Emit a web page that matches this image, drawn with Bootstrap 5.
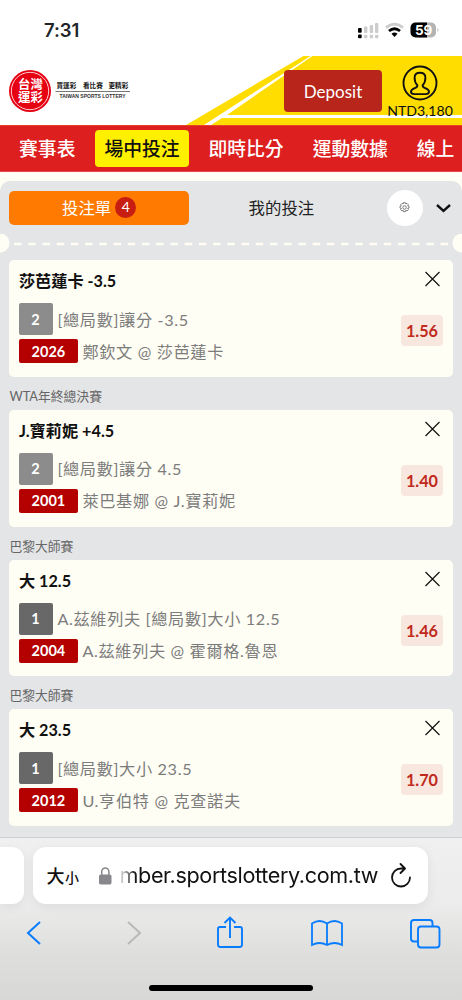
<!DOCTYPE html>
<html lang="zh-Hant">
<head>
<meta charset="utf-8">
<meta name="viewport" content="width=device-width, initial-scale=1">
<title>台灣運彩</title>
<link href="https://cdn.jsdelivr.net/npm/bootstrap@5.3.0/dist/css/bootstrap.min.css" rel="stylesheet">
<style>
body{font-family:Lato,"Noto Sans CJK TC",sans-serif;background:#fff;height:1000px;overflow:hidden;line-height:1.2}
svg{display:block;flex:none}
.status{height:56px;padding:4px 22px 0 44px;font-family:Inter,sans-serif}
.clock{font-size:18.5px;font-weight:600;letter-spacing:-.1px}
.masthead{height:69px}
.stripes{inset:0}
.masthead .inner{height:69px;padding:0 9px}
.deposit{width:98px;height:42px;margin-top:1px;background:#b8261b;border-radius:4px;color:#fff;font-size:17px;--bs-btn-padding-x:0;--bs-btn-padding-y:0;line-height:41px}
.user{width:66px;margin-left:5px;padding-top:9px;font-size:14.1px;color:#111}
.user span{margin-top:2px}
.mainnav{height:47px;background:#dd1f1f;border-top:1px solid #e8432b;border-bottom:1px solid #e8484a;padding-left:9.5px;font-size:18.8px;overflow:hidden;white-space:nowrap}
.mainnav .nav-link{height:37px;line-height:37px;color:#fff;padding:0 9.6px;margin-right:9.8px;border-radius:4px;font-weight:500}
.mainnav .nav-link.active{background:#fff000;color:#111}
.slip{height:665px;padding-top:9px;background:#fffef4;overflow:hidden}
.sheet{height:656px;background:#e4e5e7;border-radius:10px 10px 0 0;padding:0 9.5px 0 9.4px}
.tabs{height:53px}
.tab-bet{width:179.5px;height:34px;background:#ff7a00;color:#fff;border-radius:5px;font-size:16.4px}
.tab-mine{width:198px;padding-right:13px;font-size:16.4px;color:#222}
.count{width:21px;height:21px;background:#c81e12;font-size:14px}
.gear{width:36px;height:36px;background:#fff}
.perf{height:26.4px;margin:0 -9.5px}
.pick{height:116.5px;background:#fffef4;border-radius:5px;padding:11px 9.5px 0 9.5px}
.league{height:33.2px;line-height:38px;font-size:12.8px;color:#666}
.pick-title{font-size:16.2px;font-weight:700;line-height:20px;color:#111}
.pick-line{font-size:16.2px;letter-spacing:.65px;color:#7c7c7c;white-space:nowrap}
.tag-side{width:34px;height:32px;background:#8c8c8c;border-radius:2px;color:#fff;font-size:14.5px;font-weight:700;margin-right:4.5px}
.tag-dark{background:#686868}
.tag-no{width:59px;height:24px;background:#b50000;border-radius:2px;color:#fff;font-size:14.5px;font-weight:700;letter-spacing:0;margin-right:4.5px}
.odds{width:42px;height:31px;background:#f8e7df;border-radius:4px;color:#c02a1c;font-size:16.2px;font-weight:700;margin-top:27px}
.browser{height:163px;border-top:1px solid #d0d0d2;background:linear-gradient(#f0f0f1 0,#ececec 40%,#deDEdc 72%,#d8d8d6)}
.addr{height:57px;margin-top:9px}
.prev-tab{width:24px;background:#fff;border-radius:0 12px 12px 0;box-shadow:0 3px 12px #0001}
.urlbar{width:395px;margin-left:9px;background:#fff;border-radius:13px;padding:0 16px 0 14px;box-shadow:0 3px 12px #0001;font-family:Inter,"Noto Sans CJK TC",sans-serif;color:#111}
.url{width:260px;margin-left:6px;font-size:21.6px;letter-spacing:-.36px;white-space:nowrap;overflow:hidden;-webkit-mask-image:linear-gradient(90deg,transparent,#000 18px);mask-image:linear-gradient(90deg,transparent,#000 18px)}
.tools{height:58px;padding:0 21.5px 0 18px}
.home{width:164px;height:6px;border-radius:3px;background:#000;margin:23px auto 0}
</style>
</head>
<body>
<div class="status d-flex align-items-center justify-content-between">
  <span class="clock">7:31</span>
  <svg width="84" height="20" viewBox="0 0 84 20">
    <g fill="#ccc"><rect x="8" y="6.500" width="3.400" height="6.500" rx="1"/><rect x="13.700" y="5" width="3.400" height="8" rx="1"/><rect x="19" y="3" width="3.400" height="10" rx="1"/><rect x="8" y="14.700" width="3.400" height="3.500" rx="1"/><rect x="13.700" y="14.700" width="3.400" height="3.500" rx="1"/><rect x="19" y="14.700" width="3.400" height="3.500" rx="1"/></g>
    <g fill="#000"><rect x="2" y="8" width="3.700" height="4.800" rx="1"/><rect x="2" y="14.500" width="3.700" height="3.800" rx="1"/></g>
    <path d="M30 7.700Q38.500.7 47 7.700" fill="none" stroke="#ccc" stroke-width="2.700"/><path d="M33 11Q38.500 6.400 44 11" fill="none" stroke="#000" stroke-width="2.800"/><path d="M35.500 13.700Q38.500 11.200 41.500 13.700L38.500 17z"/>
    <path d="M64 2.500h12.500a5 5 0 0 1 5 5v5a5 5 0 0 1-5 5H64z" fill="#b3b3b3" transform="translate(-1.500 0)"/><path d="M71 2.500H59.500a5 5 0 0 0-5 5v5a5 5 0 0 0 5 5H71z"/><path d="M81.500 8q2 2 0 4z" fill="#b3b3b3"/>
    <text x="67.600" y="14.800" text-anchor="middle" font-family="Inter,sans-serif" font-size="13.500" font-weight="700" fill="#fff">59</text>
  </svg>
</div>

<header class="masthead position-relative">
  <svg class="stripes position-absolute" width="462" height="69" viewBox="0 0 462 69">
    <path d="M303.500 0H462V69H186z" fill="#ffdd00"/><path d="M310.500 0h2L227 59H462v3H222l-11 7h-7z" fill="#fff"/>
  </svg>
  <div class="inner position-relative d-flex align-items-center">
    <svg width="122" height="44" viewBox="0 0 122 44">
      <circle cx="21" cy="22" r="21" fill="#e60012"/><circle cx="21" cy="22" r="18.700" fill="none" stroke="#fff" stroke-width=".8"/>
      <g fill="#fff" font-family="Noto Sans CJK TC,sans-serif" font-size="12.400" font-weight="700" text-anchor="middle"><text x="21.500" y="20">台灣</text><text x="21.500" y="33">運彩</text></g>
      <g fill="#111" font-family="Noto Sans CJK TC,sans-serif" font-size="6.600" font-weight="700"><text x="47.500" y="18.700">買運彩</text><text x="74" y="18.700">看比賽</text><text x="99.500" y="18.700">更精彩</text></g>
      <path d="M46.500 22.500H121" stroke="#555" stroke-width=".8"/>
      <text x="50.500" y="28.800" textLength="66" font-family="Liberation Sans,sans-serif" font-size="5" font-weight="700" fill="#333">TAIWAN SPORTS LOTTERY</text>
    </svg>
    <button class="btn border-0 deposit ms-auto">Deposit</button>
    <div class="user align-self-start d-flex flex-column align-items-center">
      <svg width="36" height="36" viewBox="0 0 36 36" fill="none" stroke="#111"><circle cx="18" cy="18" r="16.500" stroke-width="1.900"/><path d="M18 7.700c-3.600 0-5.400 2-5.400 5 0 3.300.6 5.500 2.700 7.400.4 1.600-.4 2.400-2.400 3.100-2.700.9-3.900 1.900-3.900 3.600 0 2 1.300 2.300 3.500 2.300h11c2.200 0 3.500-.3 3.500-2.300 0-1.700-1.200-2.700-3.900-3.600-2-.7-2.800-1.500-2.400-3.100 2.100-1.900 2.700-4.100 2.700-7.400 0-3-1.800-5-5.400-5z" stroke-width="1.900"/></svg>
      <span>NTD3,180</span>
    </div>
  </div>
</header>

<nav class="mainnav nav flex-nowrap align-items-center">
  <a class="nav-link">賽事表</a><a class="nav-link active">場中投注</a><a class="nav-link">即時比分</a><a class="nav-link">運動數據</a><a class="nav-link">線上</a>
</nav>

<main class="slip"><div class="sheet">
  <div class="tabs d-flex align-items-center">
    <div class="tab-bet d-flex align-items-center justify-content-center">投注單<span class="count rounded-circle d-flex align-items-center justify-content-center ms-1">4</span></div>
    <div class="tab-mine text-center">我的投注</div>
    <div class="gear rounded-circle d-flex align-items-center justify-content-center">
      <svg width="11" height="11" viewBox="0 0 16 16" fill="none" stroke="#555" stroke-width="1.100"><circle cx="8" cy="8" r="2.500"/><path d="M6.600 1h2.800l.5 1.900 1.700-1 2 2-1 1.700 1.900.5v2.800l-1.900.5 1 1.700-2 2-1.700-1-.5 1.900H6.600l-.5-1.900-1.700 1-2-2 1-1.700-1.900-.5V6.100l1.900-.5-1-1.700 2-2 1.700 1z"/></svg>
    </div>
    <svg class="ms-auto" width="18" height="12" viewBox="0 0 18 12"><path d="M2 3l6.500 5.800L15 3" fill="none" stroke="#111" stroke-width="2.400"/></svg>
  </div>
  <div class="perf">
    <svg width="462" height="19" viewBox="0 0 462 19"><g fill="#fffef4"><circle cx="0" cy="9" r="9.500"/><circle cx="462" cy="9" r="9.500"/></g><path d="M14 10H450" stroke="#fffef4" stroke-width="2.400" stroke-dasharray="7.500 6.720"/></svg>
  </div>

  <article class="pick d-flex justify-content-between">
    <div><div class="pick-title">莎芭蓮卡 -3.5</div>
      <div class="pick-line d-flex align-items-center mt-2 pt-1"><span class="tag-side d-flex align-items-center justify-content-center">2</span>[總局數]讓分 -3.5</div>
      <div class="pick-line d-flex align-items-center mt-1"><span class="tag-no d-flex align-items-center justify-content-center">2026</span>鄭欽文 @ 莎芭蓮卡</div></div>
    <div class="d-flex flex-column align-items-end"><svg width="21" height="17" viewBox="0 0 21 17"><path d="M4 1.500l14 14m0-14l-14 14" transform="translate(-.5 -.5)" stroke="#111" stroke-width="1.200"/></svg><span class="odds d-flex align-items-center justify-content-center">1.56</span></div>
  </article>
  <div class="league">WTA年終總決賽</div>
  <article class="pick d-flex justify-content-between">
    <div><div class="pick-title">J.寶莉妮 +4.5</div>
      <div class="pick-line d-flex align-items-center mt-2 pt-1"><span class="tag-side d-flex align-items-center justify-content-center">2</span>[總局數]讓分 4.5</div>
      <div class="pick-line d-flex align-items-center mt-1"><span class="tag-no d-flex align-items-center justify-content-center">2001</span>萊巴基娜 @ J.寶莉妮</div></div>
    <div class="d-flex flex-column align-items-end"><svg width="21" height="17" viewBox="0 0 21 17"><path d="M4 1.500l14 14m0-14l-14 14" transform="translate(-.5 -.5)" stroke="#111" stroke-width="1.200"/></svg><span class="odds d-flex align-items-center justify-content-center">1.40</span></div>
  </article>
  <div class="league">巴黎大師賽</div>
  <article class="pick d-flex justify-content-between">
    <div><div class="pick-title">大 12.5</div>
      <div class="pick-line d-flex align-items-center mt-2 pt-1"><span class="tag-side tag-dark d-flex align-items-center justify-content-center">1</span>A.茲維列夫 [總局數]大小 12.5</div>
      <div class="pick-line d-flex align-items-center mt-1"><span class="tag-no d-flex align-items-center justify-content-center">2004</span>A.茲維列夫 @ 霍爾格.魯恩</div></div>
    <div class="d-flex flex-column align-items-end"><svg width="21" height="17" viewBox="0 0 21 17"><path d="M4 1.500l14 14m0-14l-14 14" transform="translate(-.5 -.5)" stroke="#111" stroke-width="1.200"/></svg><span class="odds d-flex align-items-center justify-content-center">1.46</span></div>
  </article>
  <div class="league">巴黎大師賽</div>
  <article class="pick d-flex justify-content-between">
    <div><div class="pick-title">大 23.5</div>
      <div class="pick-line d-flex align-items-center mt-2 pt-1"><span class="tag-side tag-dark d-flex align-items-center justify-content-center">1</span>[總局數]大小 23.5</div>
      <div class="pick-line d-flex align-items-center mt-1"><span class="tag-no d-flex align-items-center justify-content-center">2012</span>U.亨伯特 @ 克查諾夫</div></div>
    <div class="d-flex flex-column align-items-end"><svg width="21" height="17" viewBox="0 0 21 17"><path d="M4 1.500l14 14m0-14l-14 14" transform="translate(-.5 -.5)" stroke="#111" stroke-width="1.200"/></svg><span class="odds d-flex align-items-center justify-content-center">1.70</span></div>
  </article>
</div></main>

<footer class="browser overflow-hidden">
  <div class="addr d-flex">
    <div class="prev-tab"></div>
    <div class="urlbar d-flex align-items-center">
      <svg width="36" height="26" viewBox="0 0 36 26" font-family="Noto Sans CJK TC,sans-serif" font-weight="500" fill="#111"><text x="-.5" y="20" font-size="18">大</text><text x="18" y="20" font-size="14">小</text></svg>
      <svg class="ms-3" width="13" height="20" viewBox="0 0 13 20"><rect x="0" y="8.500" width="12.500" height="10" rx="1.800" fill="#88888c"/><path d="M2.700 9V5.700a3.600 3.800 0 0 1 7.200 0V9" fill="none" stroke="#88888c" stroke-width="1.500"/></svg>
      <div class="url d-flex justify-content-end">mber.sportslottery.com.tw</div>
      <svg class="ms-auto" width="22" height="26" viewBox="0 0 22 26" fill="none" stroke="#111" stroke-width="1.800" stroke-linecap="round" stroke-linejoin="round"><path d="M13.500 5.500H11a9 9 0 1 0 9 9M10.500 1L15 5.500 10.500 10"/></svg>
    </div>
  </div>
  <div class="tools d-flex align-items-center justify-content-between">
    <svg width="32" height="28" viewBox="-7 0 32 28" fill="none" stroke="#087cff" stroke-width="2"><path d="M15 3L3 14l12 11"/></svg>
    <svg width="32" height="28" viewBox="-9 0 32 28" fill="none" stroke="#b9b9b9" stroke-width="2"><path d="M3 3l12 11L3 25"/></svg>
    <svg width="32" height="34" viewBox="-3 0 32 34" fill="none" stroke="#087cff" stroke-width="1.900"><path d="M10 11H4q-2 0-2 2v15.500q0 2.500 2.500 2.500h19q2.500 0 2.500-2.500V13q0-2-2-2h-6M14 22V1.500M8.500 7L14 1.500 19.500 7"/></svg>
    <svg width="32" height="28" viewBox="0 0 32 28" fill="none" stroke="#087cff" stroke-width="1.800"><path d="M16 4.500Q8.500-.5 1 4.500V26q7.500-4 15 0 7.500-4 15 0V4.500Q23.500-.5 16 4.500zV26"/></svg>
    <svg width="32" height="31" viewBox="0 0 32 31" fill="none" stroke="#087cff" stroke-width="1.900"><rect x="9" y="8.500" width="21.500" height="21" rx="3"/><path d="M9 23.500H5q-3 0-3-3V5q0-3 3-3h15.500q3 0 3 3v3.500"/></svg>
  </div>
  <div class="home"></div>
</footer>
<script src="https://cdn.jsdelivr.net/npm/bootstrap@5.3.0/dist/js/bootstrap.bundle.min.js"></script>
</body>
</html>
